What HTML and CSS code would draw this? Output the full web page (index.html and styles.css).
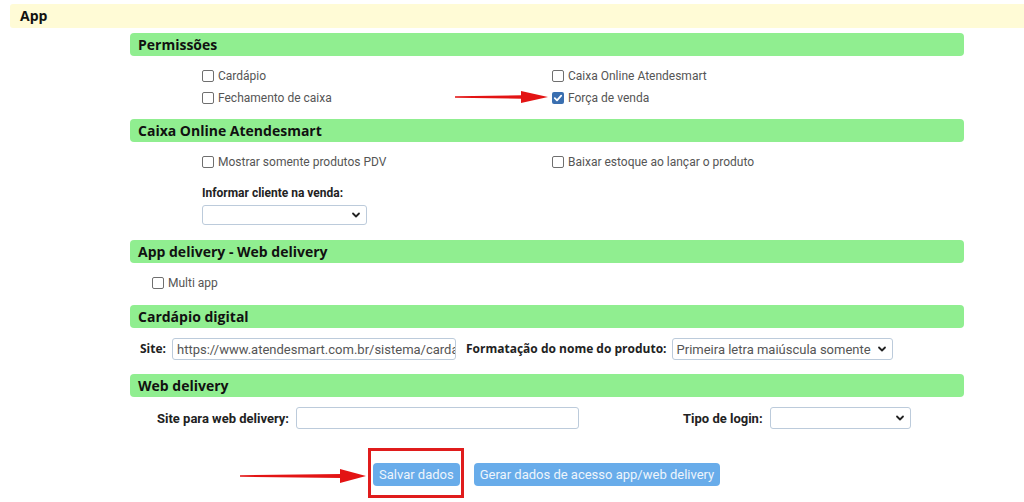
FILE: index.html
```html
<!DOCTYPE html>
<html lang="pt-BR">
<head>
<meta charset="utf-8">
<title>App</title>
<link rel="stylesheet" href="styles.css">
</head>
<body>
<div class="page">
  <div class="app-bar">App</div>
  <div class="main">
    <div class="sec-head">Permissões</div>
    <div class="sec-body perm">
      <div class="checks">
        <label class="chk"><span class="cb"></span>Cardápio</label>
        <label class="chk"><span class="cb"></span>Caixa Online Atendesmart</label>
        <label class="chk"><span class="cb"></span>Fechamento de caixa</label>
        <label class="chk"><span class="cb on"><svg viewBox="0 0 12 12" width="12" height="12"><path d="M2.8 6.2 L5 8.3 L9.2 3.6" fill="none" stroke="#fff" stroke-width="1.8" stroke-linecap="round" stroke-linejoin="round"/></svg></span>Força de venda</label>
      </div>
    </div>

    <div class="sec-head">Caixa Online Atendesmart</div>
    <div class="sec-body caixa">
      <div class="checks">
        <label class="chk"><span class="cb"></span>Mostrar somente produtos PDV</label>
        <label class="chk"><span class="cb"></span>Baixar estoque ao lançar o produto</label>
      </div>
      <div class="stack">
        <div class="lbl-r">Informar cliente na venda:</div>
        <div class="sel sel-cliente"><span class="sel-text"></span><svg class="chev" viewBox="0 0 10 10" width="10" height="10"><path d="M2 3.5 L5 6.5 L8 3.5" fill="none" stroke="#222" stroke-width="1.8" stroke-linecap="round" stroke-linejoin="round"/></svg></div>
      </div>
    </div>

    <div class="sec-head">App delivery - Web delivery</div>
    <div class="sec-body multi">
      <label class="chk"><span class="cb"></span>Multi app</label>
    </div>

    <div class="sec-head">Cardápio digital</div>
    <div class="sec-body row cardapio">
      <span class="lbl-o">Site:</span>
      <div class="inp inp-site"><span class="inp-text">https://www.atendesmart.com.br/sistema/carda</span></div>
      <span class="lbl-o lbl-fmt">Formatação do nome do produto:</span>
      <div class="sel sel-fmt"><span class="sel-text">Primeira letra maiúscula somente</span><svg class="chev" viewBox="0 0 10 10" width="10" height="10"><path d="M2 3.5 L5 6.5 L8 3.5" fill="none" stroke="#222" stroke-width="1.8" stroke-linecap="round" stroke-linejoin="round"/></svg></div>
    </div>

    <div class="sec-head">Web delivery</div>
    <div class="sec-body row webdel">
      <span class="lbl-w">Site para web delivery:</span>
      <div class="inp inp-web"></div>
      <span class="lbl-w lbl-tipo">Tipo de login:</span>
      <div class="sel sel-tipo"><span class="sel-text"></span><svg class="chev" viewBox="0 0 10 10" width="10" height="10"><path d="M2 3.5 L5 6.5 L8 3.5" fill="none" stroke="#222" stroke-width="1.8" stroke-linecap="round" stroke-linejoin="round"/></svg></div>
    </div>

    <div class="buttons">
      <div class="save-wrap">
        <button class="btn">Salvar dados</button>
        <span class="redbox"></span>
      </div>
      <button class="btn">Gerar dados de acesso app/web delivery</button>
    </div>
  </div>

  <svg class="arrow arrow-1" viewBox="0 0 96 14" width="96" height="14"><path d="M0 6.2 L67 5.2 L67 8.8 L0 7.8 Z" fill="#e31414"/><path d="M66 1 L93 7 L66 13 Z" fill="#e31414"/></svg>
  <svg class="arrow arrow-2" viewBox="0 0 128 16" width="128" height="16"><path d="M0 7.2 L102 6 L102 10 L0 8.8 Z" fill="#e31414"/><path d="M100 1 L126 8 L100 15 Z" fill="#e31414"/></svg>
</div>
</body>
</html>
```
FILE: styles.css
```css
html, body {
  margin: 0;
  background: #fff;
}
body {
  font-family: Roboto, "Liberation Sans", sans-serif;
  color: #222;
}
.page {
  position: relative;
  padding-top: 4px;
  height: 502px;
  box-sizing: border-box;
}
.app-bar {
  margin-left: 10px;
  height: 24px;
  background: #fffbd6;
  border-radius: 3px 0 0 3px;
  padding-left: 10px;
  font: 700 14px/24px "Open Sans", sans-serif;
  color: #111;
}
.main {
  width: 834px;
  margin: 5px 0 0 130px;
}
.sec-head {
  height: 23px;
  background: #90ee90;
  border-radius: 4px;
  padding-left: 8px;
  font: 700 14px/23px "Open Sans", sans-serif;
  color: #111;
}
.sec-body.perm {
  padding: 9px 0 10px 72px;
}
.sec-body.caixa {
  padding: 9px 0 15px 72px;
}
.sec-body.multi {
  padding: 9px 0 11px 22px;
}
.checks {
  display: grid;
  grid-template-columns: 350px 1fr;
  grid-auto-rows: 22px;
}
.chk {
  display: flex;
  align-items: center;
  height: 22px;
  font-size: 12px;
  color: #555;
  white-space: nowrap;
}
.cb {
  width: 10px;
  height: 10px;
  border: 1px solid #6f6f6f;
  border-radius: 2px;
  margin-right: 4px;
  display: inline-flex;
  background: #fff;
}
.cb.on {
  width: 12px;
  height: 12px;
  border: none;
  background: #3a6fb0;
}
.stack {
  margin-top: 13px;
}
.lbl-r {
  font: 700 12px/14px Roboto, sans-serif;
  color: #222;
  white-space: nowrap;
}
.lbl-w {
  font: 700 13px/15px Roboto, sans-serif;
  color: #222;
  white-space: nowrap;
}
.lbl-o {
  font: 700 12px/14px "Open Sans", sans-serif;
  color: #222;
  white-space: nowrap;
}
.sel, .inp {
  position: relative;
  box-sizing: border-box;
  height: 22px;
  border: 1px solid #bccbdb;
  border-radius: 3px;
  background: #fff;
  font-size: 13px;
  color: #555;
  display: flex;
  align-items: center;
  padding-left: 4px;
  overflow: hidden;
  white-space: nowrap;
}
.sel-cliente {
  margin-top: 5px;
  width: 165px;
  height: 20px;
}
.chev {
  position: absolute;
  right: 5px;
  top: 50%;
  margin-top: -5px;
}
.sec-body.row {
  display: flex;
  align-items: center;
  height: 22px;
}
.sec-body.cardapio {
  padding: 10px 0 14px 10px;
}
.lbl-o:first-child {
  width: 28px;
}
.inp-site {
  margin-left: 4px;
  width: 284px;
}
.lbl-fmt {
  margin-left: 10px;
}
.sel-fmt {
  margin-left: 5px;
  width: 221px;
}
.sec-body.webdel {
  padding: 10px 0 0 27px;
}
.lbl-w:first-child {
  width: 133px;
}
.inp-web {
  margin-left: 6px;
  width: 283px;
}
.lbl-tipo {
  margin-left: 104px;
  width: 82px;
}
.sel-tipo {
  margin-left: 5px;
  width: 141px;
}
.buttons {
  display: flex;
  gap: 14px;
  margin: 34px 0 0 243px;
}
.save-wrap {
  position: relative;
  display: flex;
}
.btn {
  height: 23px;
  border: none;
  border-radius: 4px;
  background: #68acea;
  color: #eef5fc;
  font: 400 13px/23px Roboto, sans-serif;
  padding: 0 6px;
  cursor: pointer;
}
.redbox {
  position: absolute;
  left: -5px;
  top: -15px;
  right: -4px;
  bottom: -12px;
  border: 3px solid #e01c1c;
  pointer-events: none;
}
.arrow {
  position: absolute;
}
.arrow-1 {
  left: 455px;
  top: 90px;
}
.arrow-2 {
  left: 240px;
  top: 468px;
}
```
